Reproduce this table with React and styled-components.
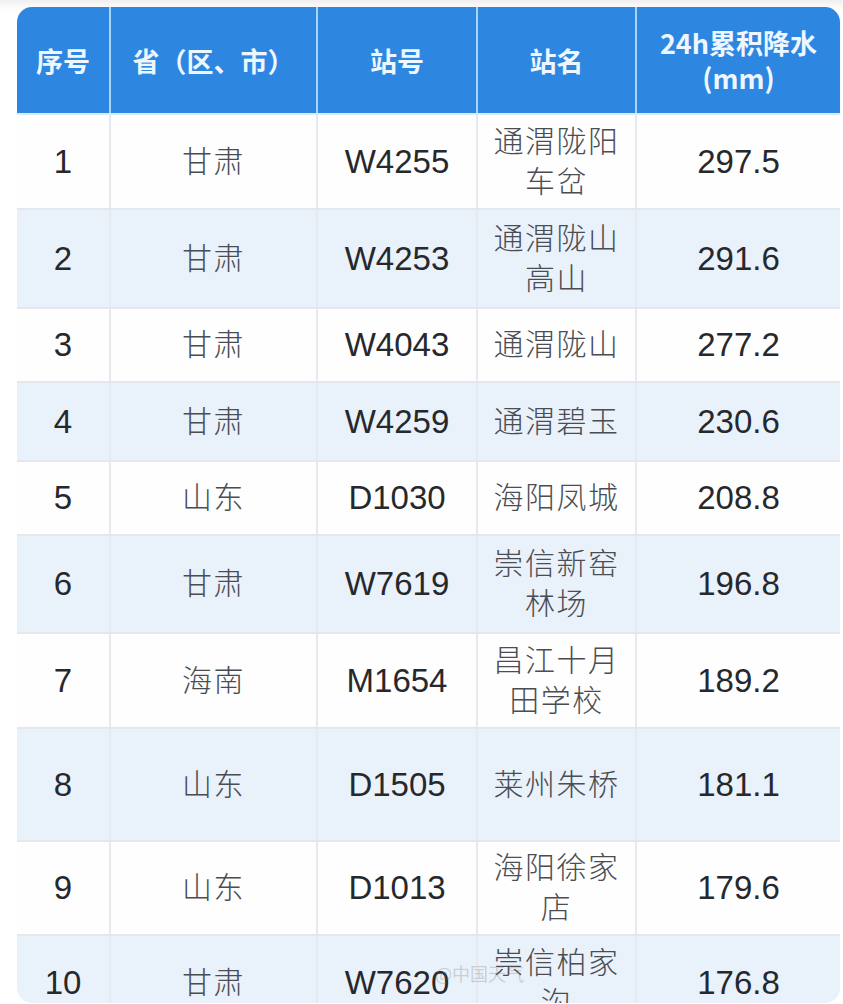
import React from "react";
import styled, { createGlobalStyle } from "styled-components";

const GlobalStyle = createGlobalStyle`
  html, body {
    margin: 0;
    padding: 0;
    background: #ffffff;
  }
  body {
    font-family: "Liberation Sans", "Noto Sans CJK SC", sans-serif;
  }
`;

const columns = "94px 207px 160px 159px 1fr";

const rows = [
  { no: "1", prov: "甘肃", id: "W4255", name: ["通渭陇阳", "车岔"], rain: "297.5", h: 95 },
  { no: "2", prov: "甘肃", id: "W4253", name: ["通渭陇山", "高山"], rain: "291.6", h: 99 },
  { no: "3", prov: "甘肃", id: "W4043", name: ["通渭陇山"], rain: "277.2", h: 74 },
  { no: "4", prov: "甘肃", id: "W4259", name: ["通渭碧玉"], rain: "230.6", h: 79 },
  { no: "5", prov: "山东", id: "D1030", name: ["海阳凤城"], rain: "208.8", h: 74 },
  { no: "6", prov: "甘肃", id: "W7619", name: ["崇信新窑", "林场"], rain: "196.8", h: 98 },
  { no: "7", prov: "海南", id: "M1654", name: ["昌江十月", "田学校"], rain: "189.2", h: 95 },
  { no: "8", prov: "山东", id: "D1505", name: ["莱州朱桥"], rain: "181.1", h: 113 },
  { no: "9", prov: "山东", id: "D1013", name: ["海阳徐家", "店"], rain: "179.6", h: 94 },
  { no: "10", prov: "甘肃", id: "W7620", name: ["崇信柏家", "沟"], rain: "176.8", h: 95 },
];

const App = () => {
  return (
    <Page>
      <GlobalStyle />
      <Card>
        <HeadRow>
          <HeadCell>序号</HeadCell>
          <HeadCell>省（区、市）</HeadCell>
          <HeadCell>站号</HeadCell>
          <HeadCell>站名</HeadCell>
          <HeadCell $last>
            24h累积降水
            <br />
            (mm)
          </HeadCell>
        </HeadRow>
        {rows.map((row, index) => (
          <Row key={row.no} $h={row.h} $alt={index % 2 === 1}>
            <NumCell>{row.no}</NumCell>
            <TextCell>{row.prov}</TextCell>
            <NumCell>{row.id}</NumCell>
            <TextCell>
              {row.name.map((line) => (
                <NameLine key={line}>{line}</NameLine>
              ))}
            </TextCell>
            <NumCell $last>{row.rain}</NumCell>
          </Row>
        ))}
        <Watermark>@中国天气</Watermark>
      </Card>
    </Page>
  );
};

const Page = styled.div`
  padding: 7px 3px 0 17px;
  background: linear-gradient(180deg, #f0f0f0 0px, #ffffff 10px);
`;
const Card = styled.div`
  position: relative;
  height: 996px;
  overflow: hidden;
  border-radius: 15px;
  background: #ffffff;
`;
const HeadRow = styled.div`
  display: grid;
  grid-template-columns: ${columns};
  height: 106px;
  background: #2d87e1;
  border-bottom: 2px solid #d8ecfd;
`;
const HeadCell = styled.div`
  display: flex;
  align-items: center;
  justify-content: center;
  text-align: center;
  font-family: "Noto Sans CJK SC", "Liberation Sans", sans-serif;
  font-weight: 700;
  font-size: 27px;
  line-height: 35px;
  color: #eef6ff;
  border-right: ${(p) => (p.$last ? "none" : "2px solid #a9d3f7")};
`;
const Row = styled.div`
  display: grid;
  grid-template-columns: ${columns};
  height: ${(p) => p.$h}px;
  background: ${(p) => (p.$alt ? "#e9f1fb" : "#fefefe")};
  border-bottom: 2px solid #e4e8ee;
  box-sizing: border-box;
`;
const Cell = styled.div`
  display: flex;
  flex-direction: column;
  align-items: center;
  justify-content: center;
  text-align: center;
  border-right: ${(p) => (p.$last ? "none" : "2px solid #e6e9ee")};
`;
const NumCell = styled(Cell)`
  font-family: "Liberation Sans", Arial, sans-serif;
  font-size: 33px;
  color: #26282c;
`;
const TextCell = styled(Cell)`
  font-family: "Noto Sans CJK SC", sans-serif;
  font-weight: 300;
  font-size: 30px;
  letter-spacing: 1.5px;
  color: #4a4d52;
  padding-bottom: 6px;
  box-sizing: border-box;
`;
const NameLine = styled.div`
  height: 40px;
  line-height: 40px;
`;
const Watermark = styled.div`
  position: absolute;
  left: 418px;
  top: 953px;
  font-family: "Noto Sans CJK SC", sans-serif;
  font-size: 18px;
  color: rgba(120, 120, 120, 0.3);
  pointer-events: none;
`;

export default App;
